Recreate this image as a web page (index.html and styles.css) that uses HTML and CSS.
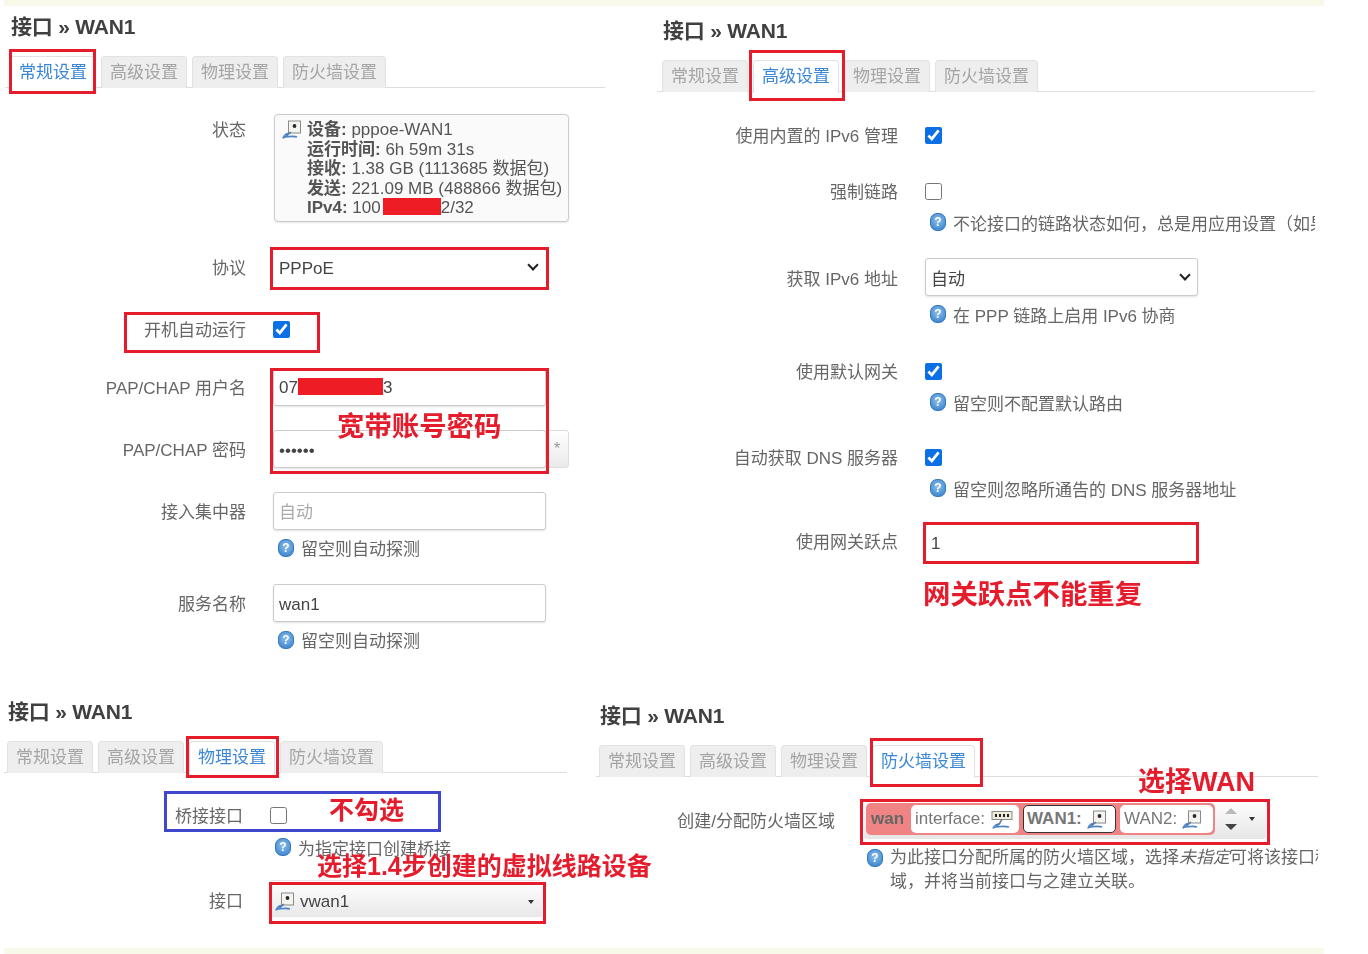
FILE: index.html
```html
<!DOCTYPE html>
<html lang="zh-CN">
<head>
    <meta charset="UTF-8">
    <title>接口 WAN1</title>
    <link rel="stylesheet" href="styles.css">
</head>
<body>
    <svg class="icon-defs" width="0" height="0">
        <defs>
            <symbol id="icon-port" viewBox="0 0 20 20">
                <rect x="6.5" y="1" width="12" height="12" fill="#f4f4f0" stroke="#8a8a8a"/>
                <circle cx="12.5" cy="6" r="1.9" fill="#2b2b2b"/>
                <path d="M9 12 L5 15" stroke="#777" stroke-width="1.4" fill="none"/>
                <path d="M1 18.5 C2 15 5 13.5 7 13.5 L3.5 17 C7 16.5 11 15.5 15 17" stroke="#4d82c4" stroke-width="1.7" fill="none"/>
            </symbol>
            <symbol id="icon-switch" viewBox="0 0 24 20">
                <rect x="2" y="1.5" width="20" height="8" fill="#ecebdc" stroke="#8a8a8a"/>
                <path d="M5 4h2v3h-2zM9 4h2v3h-2zM13 4h2v3h-2zM17 4h2v3h-2z" fill="#222"/>
                <path d="M12 9.5 L9 14" stroke="#777" stroke-width="1.4" fill="none"/>
                <path d="M3 18.5 C4 15.5 7 14 9 14 L6 17 C10 16.5 14 15.5 19 17" stroke="#4d82c4" stroke-width="1.7" fill="none"/>
            </symbol>
        </defs>
    </svg>

    <div class="sheet">
        <div class="strip"></div>

        <div class="shots shots-top">
            <!-- general tab -->
            <section class="panel panel-general">
                <h2 class="title">接口 » WAN1</h2>
                <div class="tabs">
                    <span class="tab tab-active">常规设置</span>
                    <span class="tab">高级设置</span>
                    <span class="tab">物理设置</span>
                    <span class="tab">防火墙设置</span>
                </div>

                <div class="row row-status">
                    <label class="row-label">状态</label>
                    <div class="status-box">
                        <svg class="icon-device"><use href="#icon-port"/></svg>
                        <div class="status-lines">
                            <div><b>设备:</b> pppoe-WAN1</div>
                            <div><b>运行时间:</b> 6h 59m 31s</div>
                            <div><b>接收:</b> 1.38 GB (1113685 数据包)</div>
                            <div><b>发送:</b> 221.09 MB (488866 数据包)</div>
                            <div><b>IPv4:</b> 100<span class="redact redact-ip"></span>2/32</div>
                        </div>
                    </div>
                </div>
                <div class="row">
                    <label class="row-label">协议</label>
                    <div class="select-wrap">
                        <select class="control control-plain"><option>PPPoE</option></select>
                    </div>
                </div>
                <div class="row row-check row-autostart">
                    <label class="row-label">开机自动运行</label>
                    <input type="checkbox" class="check" checked>
                </div>
                <div class="row">
                    <label class="row-label">PAP/CHAP 用户名</label>
                    <div class="control fake-input">07<span class="redact redact-user"></span>3</div>
                </div>
                <div class="row">
                    <label class="row-label">PAP/CHAP 密码</label>
                    <div class="password">
                        <input type="password" class="control" value="123456">
                        <button class="reveal">*</button>
                    </div>
                </div>
                <div class="row row-hinted">
                    <label class="row-label">接入集中器</label>
                    <input type="text" class="control" placeholder="自动">
                </div>
                <div class="hint"><span class="help">?</span>留空则自动探测</div>
                <div class="row row-hinted">
                    <label class="row-label">服务名称</label>
                    <input type="text" class="control" value="wan1">
                </div>
                <div class="hint"><span class="help">?</span>留空则自动探测</div>

                <span class="mark mark-general-tab"></span>
                <span class="mark mark-proto"></span>
                <span class="mark mark-autostart"></span>
                <span class="mark mark-account"></span>
                <span class="note note-account">宽带账号密码</span>
            </section>

            <!-- advanced tab -->
            <section class="panel panel-advanced">
                <h2 class="title">接口 » WAN1</h2>
                <div class="tabs">
                    <span class="tab">常规设置</span>
                    <span class="tab tab-active">高级设置</span>
                    <span class="tab">物理设置</span>
                    <span class="tab">防火墙设置</span>
                </div>

                <div class="row row-check row-first">
                    <label class="row-label">使用内置的 IPv6 管理</label>
                    <input type="checkbox" class="check" checked>
                </div>
                <div class="row row-check row-hinted">
                    <label class="row-label">强制链路</label>
                    <input type="checkbox" class="check">
                </div>
                <div class="hint"><span class="help">?</span>不论接口的链路状态如何，总是用应用设置（如果</div>
                <div class="row row-hinted">
                    <label class="row-label">获取 IPv6 地址</label>
                    <div class="select-wrap">
                        <select class="control"><option>自动</option></select>
                    </div>
                </div>
                <div class="hint"><span class="help">?</span>在 PPP 链路上启用 IPv6 协商</div>
                <div class="row row-check row-hinted row-gateway">
                    <label class="row-label">使用默认网关</label>
                    <input type="checkbox" class="check" checked>
                </div>
                <div class="hint"><span class="help">?</span>留空则不配置默认路由</div>
                <div class="row row-check row-hinted row-dns">
                    <label class="row-label">自动获取 DNS 服务器</label>
                    <input type="checkbox" class="check" checked>
                </div>
                <div class="hint"><span class="help">?</span>留空则忽略所通告的 DNS 服务器地址</div>
                <div class="row row-metric">
                    <label class="row-label">使用网关跃点</label>
                    <input type="text" class="control control-plain" value="1">
                </div>

                <span class="mark mark-advanced-tab"></span>
                <span class="mark mark-metric"></span>
                <span class="note note-metric">网关跃点不能重复</span>
            </section>
        </div>

        <div class="shots shots-bottom">
            <!-- physical tab -->
            <section class="panel panel-physical">
                <h2 class="title">接口 » WAN1</h2>
                <div class="tabs">
                    <span class="tab">常规设置</span>
                    <span class="tab">高级设置</span>
                    <span class="tab tab-active">物理设置</span>
                    <span class="tab">防火墙设置</span>
                </div>

                <div class="row row-check row-hinted">
                    <label class="row-label">桥接接口</label>
                    <input type="checkbox" class="check">
                </div>
                <div class="hint"><span class="help">?</span>为指定接口创建桥接</div>
                <div class="row">
                    <label class="row-label">接口</label>
                    <div class="control dropdown">
                        <svg class="icon-device"><use href="#icon-port"/></svg>
                        <span>vwan1</span>
                        <i class="caret"></i>
                    </div>
                </div>

                <span class="mark mark-physical-tab"></span>
                <span class="mark mark-blue"></span>
                <span class="mark mark-device"></span>
                <span class="note note-nocheck">不勾选</span>
                <span class="note note-device">选择1.4步创建的虚拟线路设备</span>
            </section>

            <!-- firewall tab -->
            <section class="panel panel-firewall">
                <h2 class="title">接口 » WAN1</h2>
                <div class="tabs">
                    <span class="tab">常规设置</span>
                    <span class="tab">高级设置</span>
                    <span class="tab">物理设置</span>
                    <span class="tab tab-active">防火墙设置</span>
                </div>

                <div class="row row-zone">
                    <label class="row-label">创建/分配防火墙区域</label>
                    <div class="zone-select">
                        <div class="zone">
                            <b class="zone-name">wan</b>
                            <span class="zone-chip zone-chip-wide">interface: <svg class="icon-switch"><use href="#icon-switch"/></svg></span>
                            <span class="zone-chip zone-chip-on"><b>WAN1:</b> <svg class="icon-device"><use href="#icon-port"/></svg></span>
                            <span class="zone-chip">WAN2: <svg class="icon-device"><use href="#icon-port"/></svg></span>
                        </div>
                        <div class="spin"><i class="spin-up"></i><i class="spin-down"></i></div>
                        <i class="caret"></i>
                    </div>
                </div>
                <div class="hint hint-zone"><span class="help">?</span>为此接口分配所属的防火墙区域，选择<em>未指定</em>可将该接口移除<br>域，并将当前接口与之建立关联。</div>

                <span class="mark mark-firewall-tab"></span>
                <span class="mark mark-zone"></span>
                <span class="note note-wan">选择WAN</span>
            </section>
        </div>

        <div class="strip"></div>
    </div>
</body>
</html>
```

FILE: styles.css
```css
body {
    margin: 0;
    background: #fff;
    color: #555;
    font-family: "Liberation Sans", "Noto Sans CJK SC", sans-serif;
    font-size: 17px;
}

.icon-defs {
    position: absolute;
}

.sheet {
    display: grid;
    grid-template-rows: 6px 686px 256px 6px;
    height: 954px;
    width: 1368px;
    overflow: hidden;
    filter: blur(0.5px);
}

.strip {
    margin: 0 44px 0 4px;
    background: #f9f9ea;
}

.shots {
    display: flex;
    align-items: flex-start;
}

.shots-top {
    padding-left: 5px;
    gap: 52px;
}

.shots-bottom {
    padding-left: 4px;
    gap: 29px;
}

.panel {
    position: relative;
    display: flex;
    flex-direction: column;
    --label: 241px;
}

.panel-general {
    width: 600px;
    padding-top: 8px;
}

.panel-advanced {
    width: 658px;
    height: 660px;
    padding-top: 12px;
    overflow: hidden;
}

.panel-physical {
    width: 563px;
    padding-top: 7px;
    --label: 239px;
}

.panel-firewall {
    width: 722px;
    padding-top: 11px;
    overflow: hidden;
    --label: 239px;
}

.title {
    margin: 0 0 16px;
    padding-left: 6px;
    height: 26px;
    line-height: 26px;
    font-size: 21px;
    font-weight: bold;
    letter-spacing: -0.2px;
    color: #404040;
}

.panel-physical .title,
.panel-firewall .title {
    padding-left: 4px;
}

/* tabs */
.tabs {
    display: flex;
    gap: 5px;
    padding-left: 5px;
    height: 31px;
    margin-bottom: 28px;
    border-bottom: 1px solid #ddd;
}

.panel-advanced .tabs {
    margin-bottom: 27px;
}

.panel-physical .tabs {
    padding-left: 3px;
    margin-bottom: 26px;
}

.panel-firewall .tabs {
    padding-left: 3px;
    margin-bottom: 22px;
}

.tab {
    height: 31px;
    line-height: 32px;
    padding: 0 8px;
    background: #eee;
    border: 1px solid #e2e2e2;
    border-bottom: none;
    border-radius: 4px 4px 0 0;
    color: #a5a5a5;
}

.tab-active {
    height: 32px;
    background: #fff;
    color: #3b87d6;
}

/* form rows */
.row {
    display: grid;
    grid-template-columns: var(--label) minmax(0, 1fr);
    column-gap: 27px;
    align-items: center;
    margin-bottom: 24px;
}

.row-hinted {
    margin-bottom: 0;
}

.row-label {
    text-align: right;
    color: #666;
}

.row-status {
    align-items: start;
    margin-top: -2px;
    margin-bottom: 26px;
}

.row-status .row-label {
    line-height: 34px;
}

.row-check {
    height: 31px;
}

.row-first {
    margin-bottom: 25px;
}

.row-autostart {
    margin-top: 3px;
}

.row-gateway {
    margin-top: 5px;
}

.row-dns {
    margin-top: 3px;
}

.row-metric {
    margin-top: -3px;
}

.row-zone {
    margin-bottom: 7px;
}

.control {
    box-sizing: border-box;
    width: 273px;
    height: 38px;
    padding: 4px 5px 0;
    border: 1px solid #ccc;
    border-radius: 3px;
    background: #fff;
    box-shadow: 0 1px 2px rgba(0, 0, 0, 0.12);
    color: #444;
    font: inherit;
    appearance: none;
}

.control::placeholder {
    color: #aaa;
}

.control-plain {
    border-color: transparent;
    box-shadow: none;
}

.row-metric .control {
    padding-top: 8px;
}

.fake-input {
    padding-top: 0;
    line-height: 38px;
}

.select-wrap {
    position: relative;
    display: flex;
    width: 273px;
}

/* bold chevron of the native select */
.select-wrap::after {
    content: "";
    position: absolute;
    right: 9px;
    top: 13px;
    width: 6px;
    height: 6px;
    border-right: 2.5px solid #222;
    border-bottom: 2.5px solid #222;
    transform: rotate(45deg);
    pointer-events: none;
}

.check {
    width: 17px;
    height: 17px;
    margin: 2px 0 0;
    accent-color: #0b6fe6;
}

.redact {
    display: inline-block;
    background: #ee1c25;
    vertical-align: -2px;
}

.redact-ip {
    width: 58px;
    height: 17px;
    margin-left: 2px;
}

.redact-user {
    width: 85px;
    height: 17px;
}

.password {
    display: flex;
}

.reveal {
    width: 24px;
    height: 38px;
    margin-left: -1px;
    padding: 0;
    border: 1px solid #ddd;
    border-radius: 0 3px 3px 0;
    background: linear-gradient(#fff, #eaeaea);
    color: #999;
    font: inherit;
}

.hint {
    display: flex;
    align-items: center;
    gap: 7px;
    height: 24px;
    margin: 4px 0 24px calc(var(--label) + 32px);
    color: #666;
    white-space: nowrap;
}

/* a little more air under a full height control than under a checkbox */
.row-hinted:not(.row-check) + .hint {
    margin-top: 6px;
}

.panel-physical .hint {
    margin-top: 5px;
    margin-bottom: 21px;
}

.hint-zone {
    display: block;
    position: relative;
    height: auto;
    line-height: 24px;
    margin-top: 0;
    padding-left: 23px;
}

.hint-zone .help {
    position: absolute;
    left: 0;
    top: 3px;
}

.hint-zone em {
    font-style: italic;
}

.help {
    flex: none;
    box-sizing: border-box;
    width: 16px;
    height: 18px;
    border: 1px solid #3577bd;
    border-radius: 7px;
    background: radial-gradient(circle at 50% 40%, #8fc0ec, #2f7cc9);
    color: #fff;
    font-size: 12px;
    font-weight: bold;
    line-height: 16px;
    text-align: center;
}

/* status box */
.status-box {
    display: flex;
    gap: 5px;
    box-sizing: border-box;
    width: 295px;
    margin-left: 1px;
    padding: 5px 6px 3px 7px;
    border: 1px solid #ccc;
    border-radius: 4px;
    background: #fafafa;
    box-shadow: 0 1px 2px rgba(0, 0, 0, 0.1);
    line-height: 19.5px;
    white-space: nowrap;
}

.icon-device {
    flex: none;
    width: 20px;
    height: 20px;
}

.icon-switch {
    width: 24px;
    height: 20px;
    vertical-align: middle;
}

.zone-chip .icon-device {
    vertical-align: middle;
}

/* dropdowns */
.dropdown {
    display: flex;
    align-items: center;
    gap: 5px;
    width: 272px;
    padding: 5px 0 0 4px;
    background: linear-gradient(#fff, #e8e8e8);
    border-color: transparent;
    box-shadow: none;
}

.caret {
    width: 0;
    height: 0;
    border: 3px solid transparent;
    border-top: 4px solid #333;
    border-bottom: none;
}

.dropdown .caret {
    margin-left: auto;
    margin-right: 7px;
}

.zone-select {
    display: flex;
    align-items: center;
    box-sizing: border-box;
    width: 402px;
    height: 40px;
    margin-left: 2px;
    padding-left: 2px;
    border-radius: 3px;
    background: linear-gradient(#fff, #e6e6e6);
}

.zone {
    display: flex;
    align-items: center;
    gap: 4px;
    width: 349px;
    height: 32px;
    padding: 0 2px 0 5px;
    box-sizing: border-box;
    border-radius: 5px;
    background: #f08484;
}

.zone-name {
    width: 38px;
    color: #666;
}

.zone-chip {
    flex: none;
    box-sizing: border-box;
    width: 93px;
    height: 28px;
    line-height: 26px;
    padding: 0 3px;
    border: 1px solid transparent;
    border-radius: 5px;
    background: #fff;
    color: #777;
    white-space: nowrap;
}

.zone-chip-wide {
    width: 108px;
}

.zone-chip-on {
    border-color: #333;
}

.spin {
    display: flex;
    flex-direction: column;
    gap: 10px;
    margin: 0 12px 0 10px;
}

.spin-up {
    border: 6px solid transparent;
    border-top: none;
    border-bottom: 6px solid #bbb;
}

.spin-down {
    border: 6px solid transparent;
    border-bottom: none;
    border-top: 6px solid #444;
}

/* red and blue frames drawn over the screenshot */
.mark {
    position: absolute;
    box-sizing: border-box;
    border: 3px solid #e41c2c;
}

.mark-general-tab { left: 4px; top: 43px; width: 87px; height: 45px; }
.mark-proto { left: 265px; top: 241px; width: 279px; height: 43px; }
.mark-autostart { left: 119px; top: 306px; width: 196px; height: 41px; }
.mark-account { left: 265px; top: 362px; width: 279px; height: 106px; }
.mark-advanced-tab { left: 92px; top: 44px; width: 96px; height: 51px; }
.mark-metric { left: 266px; top: 516px; width: 276px; height: 42px; }
.mark-physical-tab { left: 182px; top: 44px; width: 93px; height: 42px; }
.mark-device { left: 265px; top: 190px; width: 277px; height: 42px; }
.mark-firewall-tab { left: 274px; top: 46px; width: 113px; height: 49px; }
.mark-zone { left: 264px; top: 107px; width: 410px; height: 46px; }

.mark-blue {
    left: 160px;
    top: 99px;
    width: 277px;
    height: 41px;
    border-color: #3f48cc;
}

.note {
    position: absolute;
    color: #e41c2c;
    font-size: 27.4px;
    font-weight: bold;
    line-height: 30px;
    white-space: nowrap;
}

.note-account { left: 332px; top: 406px; }
.note-metric { left: 266px; top: 574px; }
.note-nocheck { left: 325px; top: 103px; font-size: 25px; }
.note-device { left: 313px; top: 159px; font-size: 25px; }
.note-wan { left: 542px; top: 75px; font-size: 27px; }
```
